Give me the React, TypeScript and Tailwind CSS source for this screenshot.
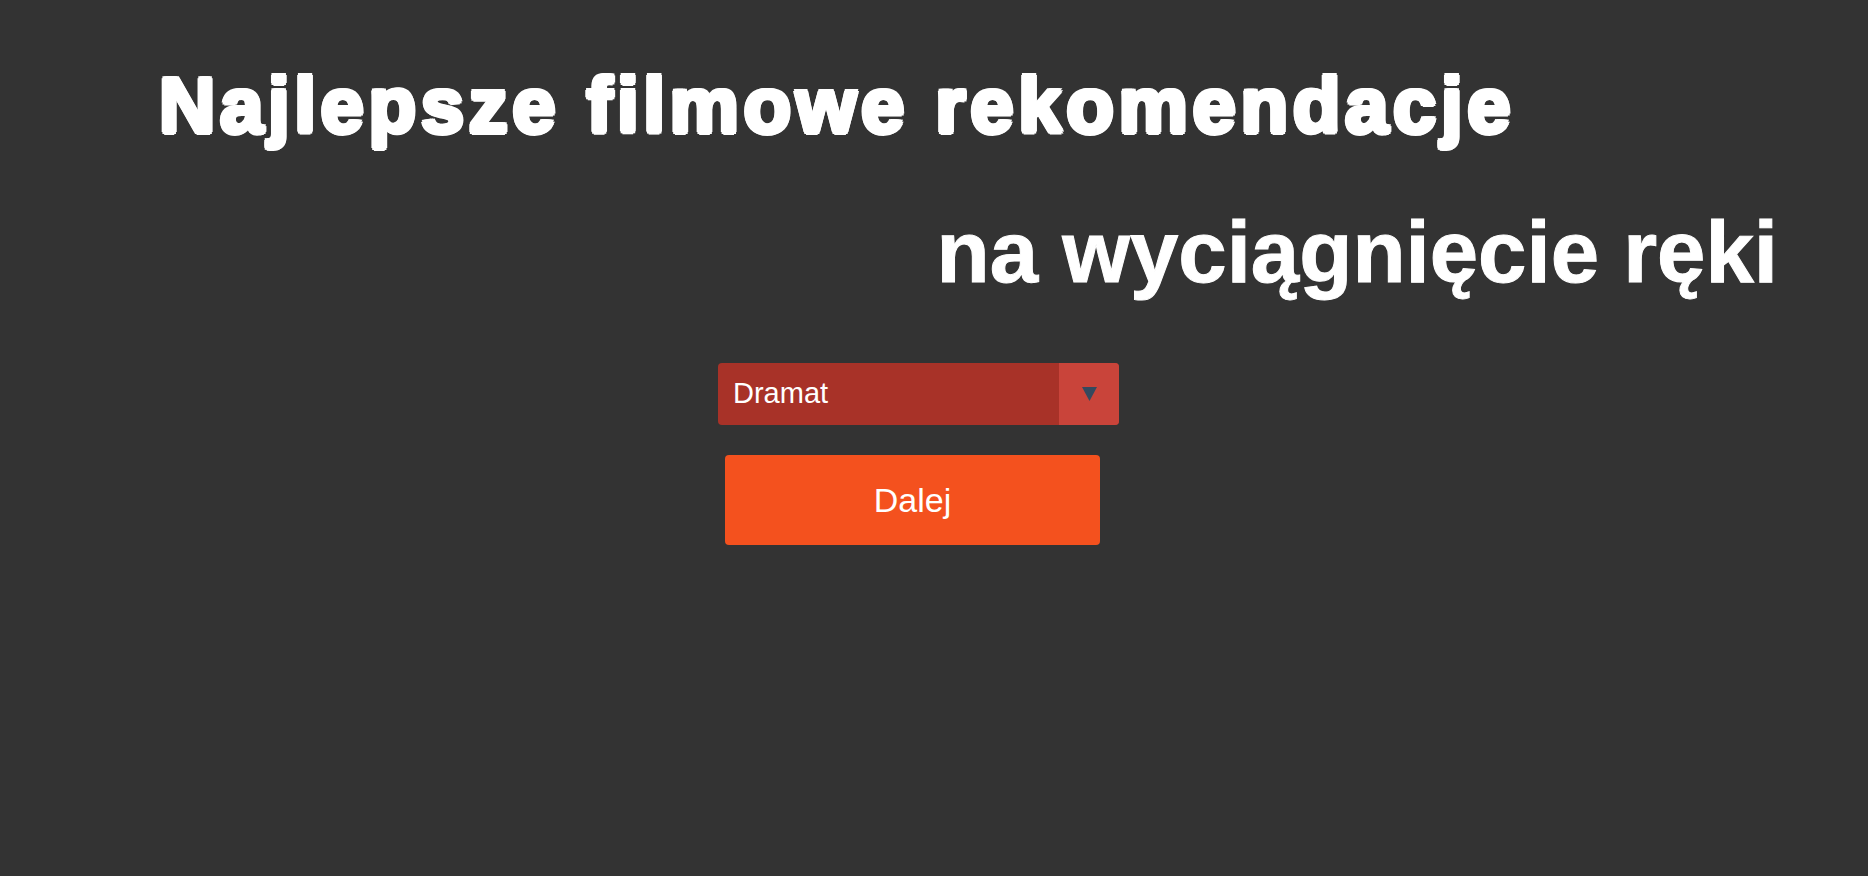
import React, { useState } from "react";

const genres = ["Dramat", "Komedia", "Horror", "Akcja", "Sci-Fi"];

const App: React.FC = () => {
  const [genre, setGenre] = useState("Dramat");

  return (
    <div className="min-h-screen w-full bg-[#333333] font-['Liberation_Sans',Arial,sans-serif] text-white">
      <h1 className="pt-[66px] pl-[159px] text-[78px] leading-[78px] font-bold tracking-[4.6px] whitespace-nowrap [text-shadow:2.5px_0_0_#fff,-2.5px_0_0_#fff,0_2.5px_0_#fff,0_-2.5px_0_#fff,1.8px_1.8px_0_#fff,-1.8px_1.8px_0_#fff,1.8px_-1.8px_0_#fff,-1.8px_-1.8px_0_#fff]">
        Najlepsze filmowe rekomendacje
      </h1>
      <h2 className="mt-[64px] pr-[90px] text-right text-[87px] leading-[87px] font-bold [-webkit-text-stroke:1px_white] whitespace-nowrap">
        na wyciągnięcie ręki
      </h2>

      <div className="ml-[718px] mt-[68px] flex w-[401px] flex-col">
        <div className="relative flex h-[62px] w-full overflow-hidden rounded-[4px] bg-[#a83228]">
          <select
            value={genre}
            onChange={(e) => setGenre(e.target.value)}
            className="h-full flex-1 appearance-none bg-transparent pl-[15px] text-[29px] text-white outline-none"
          >
            {genres.map((g) => (
              <option key={g} value={g} className="text-black">
                {g}
              </option>
            ))}
          </select>
          <div className="pointer-events-none flex w-[60px] items-center justify-center bg-[#c9443a]">
            <svg width="15" height="14" viewBox="0 0 15 14">
              <polygon points="0,0 15,0 7.5,14" fill="#34495e" />
            </svg>
          </div>
        </div>

        <button className="ml-[7px] mt-[30px] h-[90px] w-[375px] rounded-[4px] bg-[#f4511e] text-[34px] text-white">
          Dalej
        </button>
      </div>
    </div>
  );
};

export default App;
